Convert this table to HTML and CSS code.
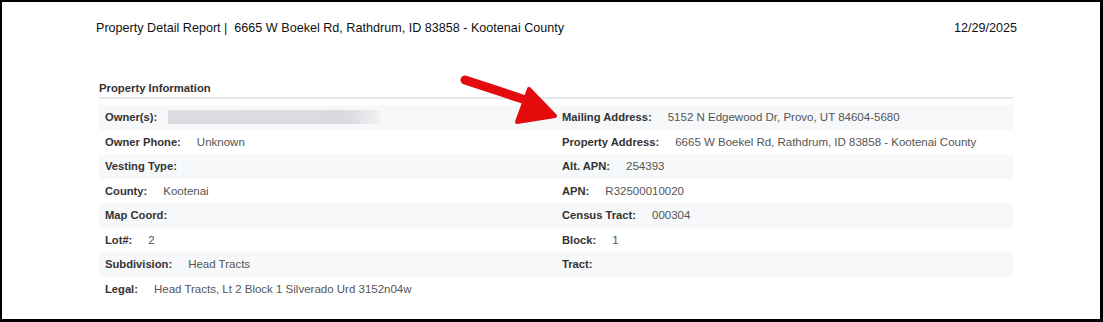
FILE: index.html
```html
<!DOCTYPE html>
<html lang="en">
<head>
    <meta charset="UTF-8">
    <meta name="viewport" content="width=device-width, initial-scale=1.0">
    <title>Property Detail Report</title>
    <link rel="stylesheet" href="styles.css">
</head>
<body>
    <div class="report">
        <div class="report-header">
            <span>Property Detail Report |&nbsp; 6665 W Boekel Rd, Rathdrum, ID 83858 - Kootenai County</span>
            <span>12/29/2025</span>
        </div>

        <div class="section">
            <div class="section-title">Property Information</div>

            <div class="info-row">
                <div class="field"><b>Owner(s):</b><span class="redacted"></span></div>
                <div class="field"><b>Mailing Address:</b><span>5152 N Edgewood Dr, Provo, UT 84604-5680</span></div>
            </div>
            <div class="info-row">
                <div class="field"><b>Owner Phone:</b><span>Unknown</span></div>
                <div class="field"><b>Property Address:</b><span>6665 W Boekel Rd, Rathdrum, ID 83858 - Kootenai County</span></div>
            </div>
            <div class="info-row">
                <div class="field"><b>Vesting Type:</b></div>
                <div class="field"><b>Alt. APN:</b><span>254393</span></div>
            </div>
            <div class="info-row">
                <div class="field"><b>County:</b><span>Kootenai</span></div>
                <div class="field"><b>APN:</b><span>R32500010020</span></div>
            </div>
            <div class="info-row">
                <div class="field"><b>Map Coord:</b></div>
                <div class="field"><b>Census Tract:</b><span>000304</span></div>
            </div>
            <div class="info-row">
                <div class="field"><b>Lot#:</b><span>2</span></div>
                <div class="field"><b>Block:</b><span>1</span></div>
            </div>
            <div class="info-row">
                <div class="field"><b>Subdivision:</b><span>Head Tracts</span></div>
                <div class="field"><b>Tract:</b></div>
            </div>
            <div class="info-row">
                <div class="field"><b>Legal:</b><span>Head Tracts, Lt 2 Block 1 Silverado Urd 3152n04w</span></div>
            </div>
        </div>

        <!-- red pointer over the mailing address -->
        <svg class="pointer" width="110" height="60" viewBox="0 0 110 60">
            <line x1="6" y1="8" x2="82" y2="33" stroke="#e30b0b" stroke-width="9" stroke-linecap="round"/>
            <polygon points="70,17 96,44 58,50" fill="#e30b0b" stroke="#e30b0b" stroke-width="4" stroke-linejoin="round"/>
        </svg>
    </div>
</body>
</html>
```

FILE: styles.css
```css
* {
    box-sizing: border-box;
    margin: 0;
    padding: 0;
}

body {
    background-color: #ffffff;
    font-family: "Liberation Sans", Arial, sans-serif;
}

.report {
    position: relative;
    width: 1103px;
    height: 322px;
    border-style: solid;
    border-color: #000000;
    border-width: 2px 3px 3px 2px;
    background-color: #ffffff;
}

.report-header {
    display: flex;
    justify-content: space-between;
    padding: 19px 83px 0 94px;
    font-size: 12.6px;
    line-height: 15px;
    color: #111;
}

.section {
    width: 914px;
    margin: 45px 0 0 97px;
}

.section-title {
    padding: 0 0 2px 0;
    font-size: 11.3px;
    line-height: 14px;
    font-weight: bold;
    color: #333;
    border-bottom: 2px solid #e3e6ea;
    margin-bottom: 6px;
}

.info-row {
    display: grid;
    grid-template-columns: 1fr 1fr;
    height: 24.5px;
}

.info-row:nth-of-type(even) {
    background-color: #f7f8fa;
}

.field {
    display: flex;
    align-items: center;
    gap: 16px;
    padding-left: 6px;
    font-size: 11.5px;
    color: #555;
}

.field b {
    font-size: 11.2px;
    color: #333;
}

.redacted {
    display: block;
    width: 212px;
    height: 14px;
    margin-left: -5px;
    background: linear-gradient(to right, #dadcdf 0%, #d9dbde 85%, #f1f2f4 100%);
}

.pointer {
    position: absolute;
    left: 457px;
    top: 70px;
}
```
